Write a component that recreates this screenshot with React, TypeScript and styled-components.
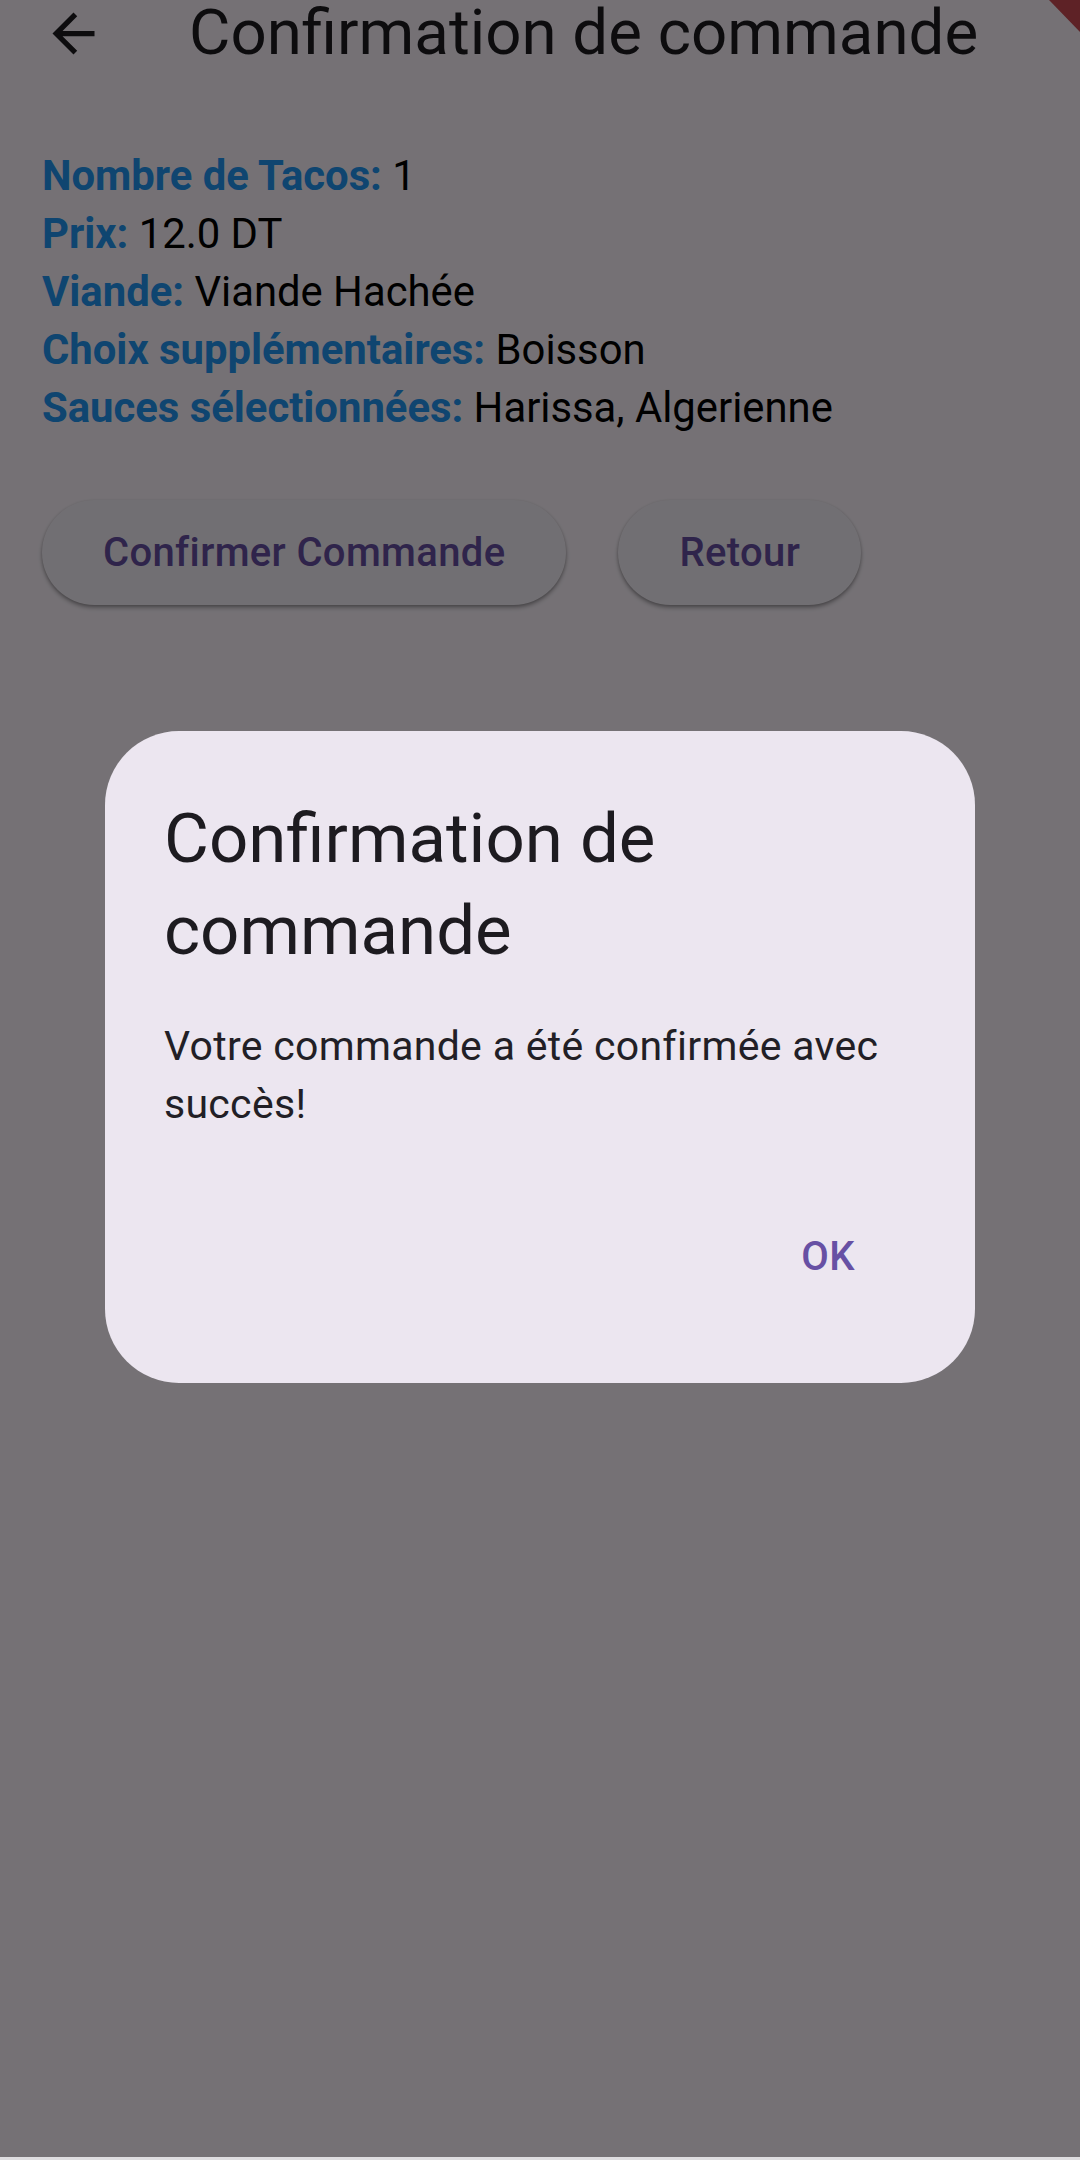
import React from "react";
import styled, { createGlobalStyle } from "styled-components";

const GlobalStyle = createGlobalStyle`
  html, body {
    margin: 0;
    padding: 0;
    background: #dedde0;
  }
  body {
    font-family: Roboto, "Noto Sans", "Liberation Sans", sans-serif;
    -webkit-font-smoothing: antialiased;
  }
  * { box-sizing: border-box; }
`;

const Screen = styled.div`
  position: relative;
  width: 1080px;
  height: 2157px;
  background: #fef7ff;
  overflow: hidden;
  display: flex;
  flex-direction: column;
`;

const AppBar = styled.header`
  height: 66px;
  display: flex;
  align-items: center;
`;

const Leading = styled.button`
  width: 147px;
  height: 66px;
  border: 0;
  padding: 0;
  background: transparent;
  display: flex;
  align-items: center;
  justify-content: center;
  color: #1d1b20;
`;

const AppTitle = styled.h1`
  margin: 0 0 0 42px;
  font-size: 63.6px;
  font-weight: 400;
  line-height: 66px;
  color: #1d1b20;
  white-space: nowrap;
`;

const Body = styled.main`
  padding: 81px 42px 0 42px;
  display: flex;
  flex-direction: column;
`;

const InfoList = styled.div`
  display: flex;
  flex-direction: column;
`;

const InfoRow = styled.div`
  font-size: 41.8px;
  line-height: 58px;
  color: #000;
  white-space: nowrap;
`;

const Label = styled.span`
  font-weight: 700;
  color: #2196f3;
`;

const Actions = styled.div`
  margin-top: 63px;
  display: flex;
  gap: 52px;
`;

const PillButton = styled.button`
  height: 105px;
  padding: 0 61px;
  border: 0;
  border-radius: 53px;
  background: #f7f2fa;
  color: #6750a4;
  font-family: Roboto, "Noto Sans", sans-serif;
  font-size: 40px;
  font-weight: 500;
  letter-spacing: 0.35px;
  box-shadow: 0 3px 4px rgba(0, 0, 0, 0.28), 0 1px 3px rgba(0, 0, 0, 0.18);
`;

const Barrier = styled.div`
  position: fixed;
  left: 0;
  top: 0;
  width: 1080px;
  height: 2157px;
  background: rgba(0, 0, 0, 0.54);
  display: flex;
  flex-direction: column;
  align-items: center;
  padding-top: 731px;
`;

const Dialog = styled.div`
  width: 870px;
  background: #ece6f0;
  border-radius: 74px;
  padding: 62px 63px 74px 59px;
  display: flex;
  flex-direction: column;
`;

const DialogTitle = styled.h2`
  margin: 0;
  font-size: 69px;
  font-weight: 400;
  line-height: 92px;
  color: #1d1b20;
`;

const DialogText = styled.p`
  margin: 40px 0 0;
  font-size: 41px;
  line-height: 58px;
  letter-spacing: 0.3px;
  color: #221f26;
`;

const DialogActions = styled.div`
  margin-top: 71px;
  display: flex;
  justify-content: flex-end;
`;

const TextButton = styled.button`
  min-width: 168px;
  height: 105px;
  border: 0;
  background: transparent;
  color: #6750a4;
  font-family: Roboto, "Noto Sans", sans-serif;
  font-size: 40px;
  font-weight: 500;
  letter-spacing: 0.3px;
`;

const DebugCorner = styled.svg`
  position: fixed;
  top: 0;
  right: 0;
`;

const BackArrow = () => (
  <svg width="63" height="63" viewBox="0 0 24 24" fill="currentColor">
    <path d="M20 11H7.83l5.59-5.59L12 4l-8 8 8 8 1.41-1.41L7.83 13H20v-2z" />
  </svg>
);

const rows: { label: string; value: string }[] = [
  { label: "Nombre de Tacos:", value: "1" },
  { label: "Prix:", value: "12.0 DT" },
  { label: "Viande:", value: "Viande Hachée" },
  { label: "Choix supplémentaires:", value: "Boisson" },
  { label: "Sauces sélectionnées:", value: "Harissa, Algerienne" },
];

export default function App() {
  return (
    <>
      <GlobalStyle />
      <Screen>
        <AppBar>
          <Leading aria-label="Retour">
            <BackArrow />
          </Leading>
          <AppTitle>Confirmation de commande</AppTitle>
        </AppBar>
        <Body>
          <InfoList>
            {rows.map((r) => (
              <InfoRow key={r.label}>
                <Label>{r.label}</Label> {r.value}
              </InfoRow>
            ))}
          </InfoList>
          <Actions>
            <PillButton>Confirmer Commande</PillButton>
            <PillButton>Retour</PillButton>
          </Actions>
        </Body>
      </Screen>
      <Barrier>
        <Dialog role="dialog">
          <DialogTitle>Confirmation de commande</DialogTitle>
          <DialogText>Votre commande a été confirmée avec succès!</DialogText>
          <DialogActions>
            <TextButton>OK</TextButton>
          </DialogActions>
        </Dialog>
      </Barrier>
      <DebugCorner width="40" height="40" viewBox="0 0 40 40">
        <polygon points="9,0 40,0 40,32" fill="#5e2226" />
      </DebugCorner>
    </>
  );
}
